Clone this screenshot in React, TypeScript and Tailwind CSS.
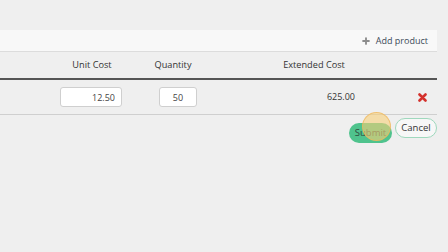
import { Plus } from 'lucide-react'

function RemoveIcon() {
  return (
    <svg width="9" height="9" viewBox="0 0 9 9">
      <path d="M1.5 1.5 L7.5 7.5 M7.5 1.5 L1.5 7.5" stroke="#d4312c" strokeWidth="2.6" strokeLinecap="round" />
    </svg>
  )
}

export default function App() {
  return (
    <div className="w-[448px] h-[252px] bg-[#efefef] overflow-hidden text-[#333]" style={{ fontFamily: '"Open Sans", sans-serif' }}>
      <div className="w-[437px] pt-[30px]">
        {/* toolbar */}
        <div className="h-[22px] bg-[#f8f8f8] border-b border-[#dcdcdc] flex items-center justify-end pr-[9px] gap-[5px]">
          <Plus size={10} strokeWidth={4.5} className="text-[#8c8c8c]" />
          <span className="text-[9px] text-[#3d4b58] leading-none">Add product</span>
        </div>

        {/* header */}
        <div className="h-[28px] grid grid-cols-[52px_80px_82px_200px_1fr] items-center text-[9.2px] border-b-2 border-[#555]">
          <div />
          <div className="text-center">Unit Cost</div>
          <div className="text-center">Quantity</div>
          <div className="text-center">Extended Cost</div>
          <div />
        </div>

        {/* product row */}
        <div className="h-[35px] grid grid-cols-[52px_80px_82px_193px_1fr] items-center text-[9px] border-b border-[#cfcfcf]">
          <div />
          <div className="pl-[8px]">
            <input
              readOnly
              value="12.50"
              className="w-[62px] h-[20px] bg-white border border-[#cfcfcf] rounded-[3px] text-right pr-[6px] text-[9px] text-[#444] outline-none"
            />
          </div>
          <div className="pl-[27px]">
            <input
              readOnly
              value="50"
              className="w-[38px] h-[20px] bg-white border border-[#cfcfcf] rounded-[3px] text-center text-[9px] text-[#444] outline-none"
            />
          </div>
          <div className="text-right pr-[52px]">625.00</div>
          <div className="flex justify-center">
            <RemoveIcon />
          </div>
        </div>

        {/* actions */}
        <div className="flex justify-end gap-[3px] pt-[3px]">
          <div className="relative">
            <button className="w-[43px] h-[20px] rounded-full bg-[#4fc38d] text-[9.5px] text-[#2f4a3c]">Submit</button>
            <span className="absolute left-[13px] top-[-6px] w-[29px] h-[29px] rounded-full bg-[#f6cf78]/60 border border-[#f0b55a]/70" />
          </div>
          <button className="w-[42px] h-[20px] rounded-full bg-[#f7f7f7] border border-[#9fd8bd] text-[9.5px] text-[#333]">Cancel</button>
        </div>
      </div>
    </div>
  )
}
